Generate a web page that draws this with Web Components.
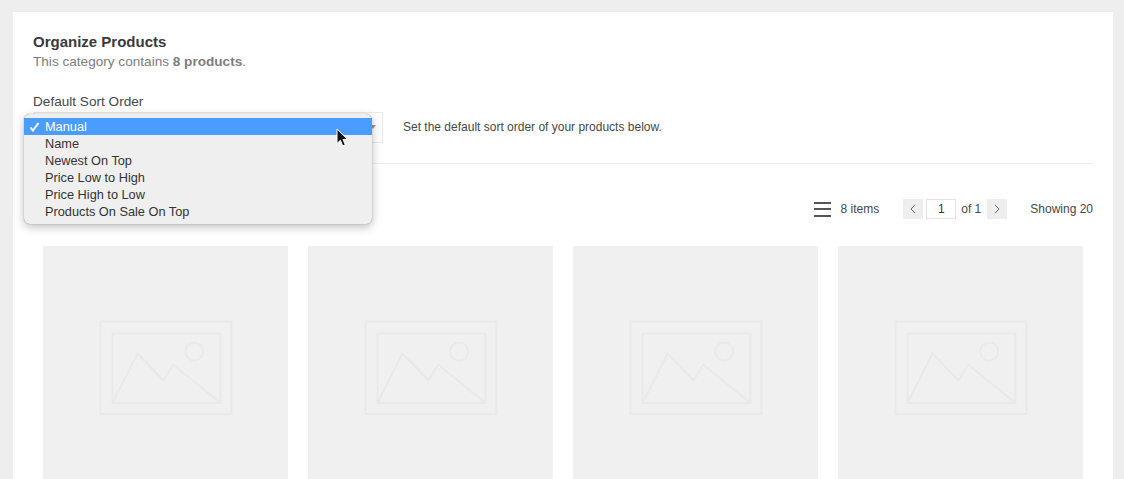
<!DOCTYPE html>
<html><head><meta charset="utf-8">
<style>
html,body{margin:0;padding:0;height:479px;overflow:hidden;background:#eee}
body{font-family:"Liberation Sans",Arial,sans-serif;color:#333}
</style></head>
<body>
<organize-page>
  <section-head title="Organize Products"><span>This category contains <b>8 products</b>.</span></section-head>
  <sort-field label="Default Sort Order" hint="Set the default sort order of your products below."></sort-field>
  <list-toolbar></list-toolbar>
  <product-grid>
    <product-tile></product-tile><product-tile></product-tile><product-tile></product-tile><product-tile></product-tile>
  </product-grid>
</organize-page>
<script>
function def(name,html,init){
  customElements.define(name,class extends HTMLElement{
    constructor(){super();this.attachShadow({mode:'open'}).innerHTML=html;}
    connectedCallback(){if(init)init(this,this.shadowRoot);}
  });
}
def('organize-page',`<style>:host{display:block;margin:12px 11px 0 13px;background:#fff;padding:20px 20px 0;height:447px;overflow:hidden}</style><slot></slot>`);
def('section-head',`<style>
:host{display:block}
h2{margin:0;font-size:15px;line-height:20px;font-weight:700;color:#3a3a3a}
p{margin:0;font-size:13.6px;line-height:19px;color:#7d7d7d}
b{color:#6f6f6f}
</style><h2></h2><p><slot></slot></p>`,(h,s)=>{s.querySelector('h2').textContent=h.getAttribute('title')});
def('sort-field',`<style>
:host{display:block;margin-top:21px;padding-bottom:20px;border-bottom:1px solid #eee}
label{display:block;font-size:13.6px;line-height:20px;color:#484848}
.row{display:flex;align-items:center;gap:20px}
.hint{font-size:12px;line-height:16px;color:#484848;margin-bottom:2px}
</style><label></label><div class="row"><sort-select></sort-select><span class="hint"></span></div>`,(h,s)=>{
  s.querySelector('label').textContent=h.getAttribute('label');
  s.querySelector('.hint').textContent=h.getAttribute('hint');
});
def('sort-select',`<style>
:host{display:block;position:relative;width:348px;height:29px;border:1px solid #e8e8e8;background:#fff;flex:none}
.arrow{position:absolute;right:6px;top:12px;width:0;height:0;border:3px solid transparent;border-top:4px solid #999;border-bottom:0}
.menu{position:absolute;left:-10px;top:1px;width:348px;box-sizing:border-box;padding:4px 0 4px;background:#efefef;border-radius:6px;box-shadow:0 0 1px rgba(0,0,0,.5),0 3px 10px rgba(0,0,0,.26);font-size:12.75px;color:#333}
.opt{height:17px;line-height:17px;padding-left:21px;position:relative;white-space:nowrap}
.opt.on{background:#4a9cff;color:#fff}
.opt svg{position:absolute;left:5px;top:4px}
.cursor{position:absolute;left:302px;top:15px;z-index:2}
</style>
<i class="arrow"></i>
<div class="menu">
<div class="opt on"><svg width="11" height="10" viewBox="0 0 11 10"><path d="M1.500 5.500l2.400 3L9.500 1" fill="none" stroke="#fff" stroke-width="2"/></svg>Manual</div>
<div class="opt">Name</div><div class="opt">Newest On Top</div><div class="opt">Price Low to High</div><div class="opt">Price High to Low</div><div class="opt">Products On Sale On Top</div>
</div>
<svg class="cursor" width="14" height="20" viewBox="0 0 14 20"><path d="M1 1v14.500l3.400-3.200 2.300 5.600 2.600-1.100-2.300-5.400h4.600z" fill="#111" stroke="#fff" stroke-width="1"/></svg>`);
def('list-toolbar',`<style>
:host{display:flex;justify-content:flex-end;align-items:center;height:20px;margin-top:35px;font-size:12px;color:#484848}
.menu{width:17px;height:15px;display:flex;flex-direction:column;justify-content:space-between;margin-right:10px}
.menu i{display:block;height:2px;background:#555}
.items{margin-right:24px}
.btn{width:20px;height:20px;background:#eee;display:flex;align-items:center;justify-content:center}
.page{box-sizing:border-box;width:30px;height:20px;border:1px solid #e3e3e3;margin:0 6px 0 3px;text-align:center;line-height:19px;color:#333}
.of{margin-left:-1px;margin-right:6px}
.show{margin-left:23px}
</style>
<div class="menu"><i></i><i></i><i></i></div><span class="items">8 items</span>
<span class="btn"><svg width="6" height="10" viewBox="0 0 6 10"><path d="M5 .8L1 5l4 4.200" fill="none" stroke="#666"/></svg></span>
<span class="page">1</span><span class="of">of 1</span>
<span class="btn"><svg width="6" height="10" viewBox="0 0 6 10"><path d="M1 .8L5 5 1 9.200" fill="none" stroke="#666"/></svg></span>
<span class="show">Showing 20</span>`);
def('product-grid',`<style>:host{display:grid;grid-template-columns:repeat(4,245px);gap:20px;margin-top:27px;padding:0 10px}</style><slot></slot>`);
def('product-tile',`<style>
:host{display:flex;align-items:center;justify-content:center;height:245px;background:#f0f0f0}
svg{display:block}
</style><svg width="134" height="98" viewBox="98.500 319.500 134 98" fill="none" stroke="#e9e9e9" stroke-width="2">
<rect x="100" y="321" width="131" height="92.500"/>
<rect x="112" y="333" width="108" height="69.500"/>
<circle cx="193.700" cy="351" r="9"/>
<path d="M112 402.500L137 353l26 27 9.700-15.700L220 402.500"/></svg>`);
</script>
</body></html>
